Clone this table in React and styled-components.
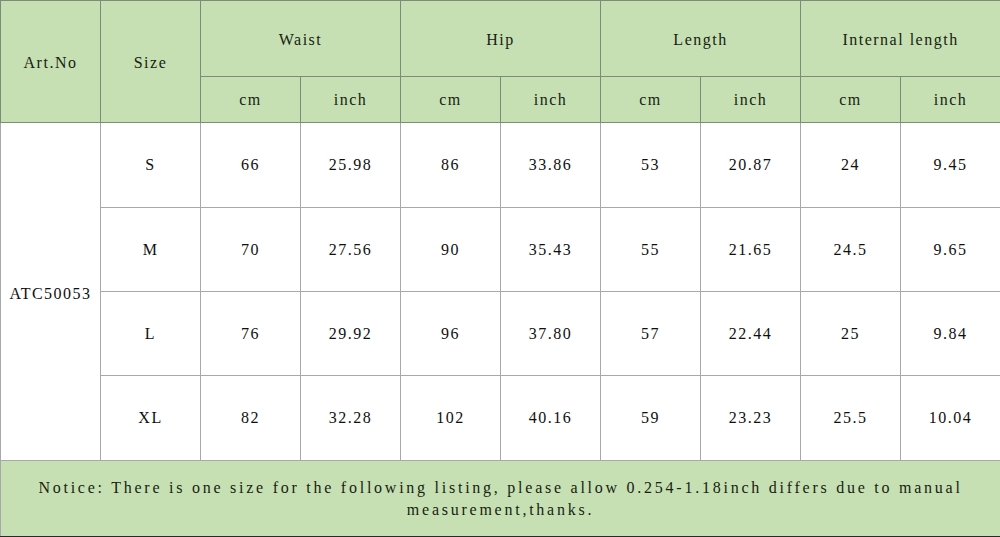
import styled, { createGlobalStyle } from "styled-components";

const GlobalStyle = createGlobalStyle`
  html, body {
    margin: 0;
    padding: 0;
    background: #ffffff;
  }
  body {
    font-family: "Liberation Serif", "DejaVu Serif", serif;
  }
`;

const Sheet = styled.table`
  width: 1000px;
  border-collapse: collapse;
  table-layout: fixed;
  font-family: "Liberation Serif", serif;
  font-size: 16px;
  letter-spacing: 1.5px;
  color: #0f0f0f;
`;

const HeadCell = styled.th`
  background: #c6e0b4;
  border: 1px solid #7d8c76;
  font-weight: normal;
  color: #16230f;
  text-align: center;
  vertical-align: middle;
  padding: 0;
  padding-top: ${(p) => p.$top || 0}px;
  height: ${(p) => p.$h}px;
`;

const Cell = styled.td`
  border: 1px solid #a8a8a8;
  text-align: center;
  vertical-align: middle;
  padding: 0;
  padding-top: ${(p) => p.$top || 0}px;
  height: ${(p) => p.$h || 83}px;
`;

const NoticeCell = styled.td`
  background: #c6e0b4;
  border: 1px solid #a8a8a8;
  border-bottom: 2px solid #2a2a2a;
  text-align: center;
  vertical-align: top;
  padding: 16px 10px 0;
  line-height: 22px;
  letter-spacing: 2.75px;
  color: #16230f;
  height: 59px;
`;

const groups = ["Waist", "Hip", "Length", "Internal length"];

const rows = [
  ["S", "66", "25.98", "86", "33.86", "53", "20.87", "24", "9.45"],
  ["M", "70", "27.56", "90", "35.43", "55", "21.65", "24.5", "9.65"],
  ["L", "76", "29.92", "96", "37.80", "57", "22.44", "25", "9.84"],
  ["XL", "82", "32.28", "102", "40.16", "59", "23.23", "25.5", "10.04"],
];

const rowHeights = [84, 83, 83, 84];

export default function App() {
  return (
    <>
      <GlobalStyle />
      <Sheet>
        <colgroup>
          {Array.from({ length: 10 }).map((_, i) => (
            <col key={i} style={{ width: 100 }} />
          ))}
        </colgroup>
        <thead>
          <tr>
            <HeadCell rowSpan={2} $top={2}>Art.No</HeadCell>
            <HeadCell rowSpan={2} $top={2}>Size</HeadCell>
            {groups.map((g) => (
              <HeadCell key={g} colSpan={2} $h={73} $top={2}>
                {g}
              </HeadCell>
            ))}
          </tr>
          <tr>
            {groups.map((g) => [
              <HeadCell key={g + "cm"} $h={45}>cm</HeadCell>,
              <HeadCell key={g + "in"} $h={45}>inch</HeadCell>,
            ])}
          </tr>
        </thead>
        <tbody>
          {rows.map((r, i) => (
            <tr key={r[0]}>
              {i === 0 && (
                <Cell rowSpan={4} $top={4}>
                  ATC50053
                </Cell>
              )}
              {r.map((v, j) => (
                <Cell key={j} $h={rowHeights[i]}>
                  {v}
                </Cell>
              ))}
            </tr>
          ))}
          <tr>
            <NoticeCell colSpan={10}>
              Notice: There is one size for the following listing, please allow
              0.254-1.18inch differs due to manual
              <br />
              measurement,thanks.
            </NoticeCell>
          </tr>
        </tbody>
      </Sheet>
    </>
  );
}
